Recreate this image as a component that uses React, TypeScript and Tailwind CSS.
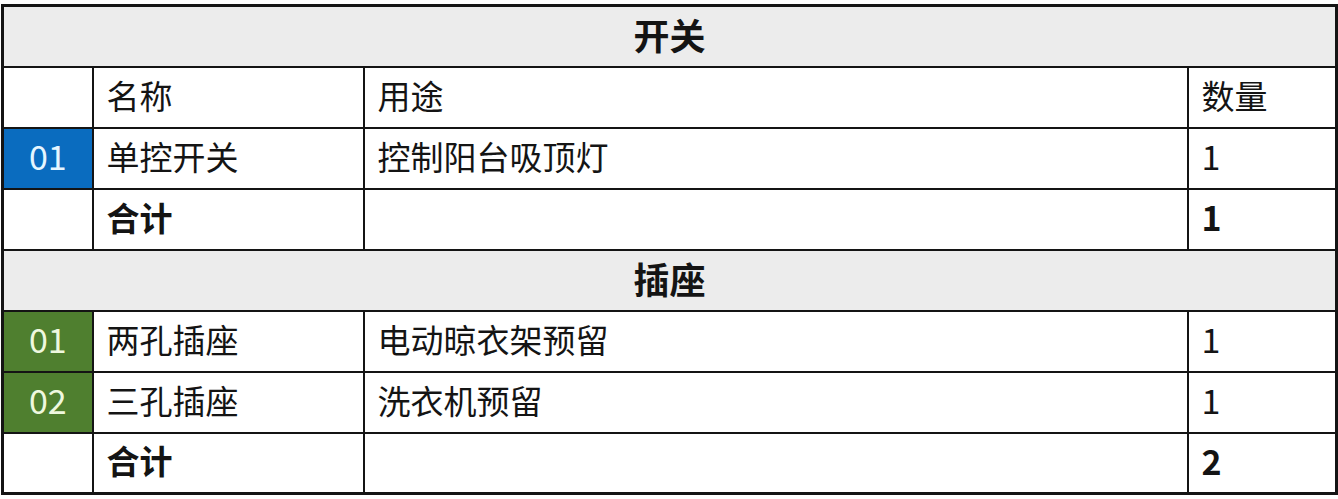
import React from "react";

type Row =
  | { kind: "section"; title: string }
  | { kind: "head" }
  | { kind: "item"; no: string; tone: "blue" | "green"; name: string; use: string; qty: string }
  | { kind: "total"; qty: string };

const rows: Row[] = [
  { kind: "section", title: "开关" },
  { kind: "head" },
  { kind: "item", no: "01", tone: "blue", name: "单控开关", use: "控制阳台吸顶灯", qty: "1" },
  { kind: "total", qty: "1" },
  { kind: "section", title: "插座" },
  { kind: "item", no: "01", tone: "green", name: "两孔插座", use: "电动晾衣架预留", qty: "1" },
  { kind: "item", no: "02", tone: "green", name: "三孔插座", use: "洗衣机预留", qty: "1" },
  { kind: "total", qty: "2" },
];

const cell = "border-2 border-[#141414] px-[13px] align-middle leading-none";
const num = "text-[34px]";

export default function App() {
  return (
    <div
      className="bg-white w-[1338px] h-[499px] pl-[1px] pt-[4px] text-[#141414]"
      style={{ fontFamily: '"Noto Sans CJK SC", "Noto Sans", sans-serif' }}
    >
      <table className="border-collapse border-[3px] border-[#141414] w-[1334px] table-fixed text-[33px]">
        <colgroup>
          <col className="w-[90px]" />
          <col className="w-[271px]" />
          <col className="w-[824px]" />
          <col className="w-[149px]" />
        </colgroup>
        <tbody>
          {rows.map((r, i) => {
            if (r.kind === "section")
              return (
                <tr key={i} className="h-[61px]">
                  <td colSpan={4} className={`${cell} bg-[#ececec] text-center font-bold text-[36px] pb-[4px]`}>
                    {r.title}
                  </td>
                </tr>
              );
            if (r.kind === "head")
              return (
                <tr key={i} className="h-[61px]">
                  <td className={cell} />
                  <td className={`${cell} pb-[4px]`}>名称</td>
                  <td className={`${cell} pb-[4px]`}>用途</td>
                  <td className={`${cell} pb-[4px]`}>数量</td>
                </tr>
              );
            if (r.kind === "item")
              return (
                <tr key={i} className="h-[61px]">
                  <td
                    className={`${cell} ${num} text-center pb-[4px] ${
                      r.tone === "blue" ? "bg-[#0a6cbf] text-[#e6f6ff]" : "bg-[#4f7f2f] text-[#eef8df]"
                    }`}
                  >
                    {r.no}
                  </td>
                  <td className={`${cell} pb-[4px]`}>{r.name}</td>
                  <td className={`${cell} pb-[4px]`}>{r.use}</td>
                  <td className={`${cell} ${num} pb-[4px]`}>{r.qty}</td>
                </tr>
              );
            return (
              <tr key={i} className="h-[61px]">
                <td className={cell} />
                <td className={`${cell} font-bold pb-[4px]`}>合计</td>
                <td className={cell} />
                <td className={`${cell} ${num} font-bold pb-[4px]`}>{r.qty}</td>
              </tr>
            );
          })}
        </tbody>
      </table>
    </div>
  );
}
